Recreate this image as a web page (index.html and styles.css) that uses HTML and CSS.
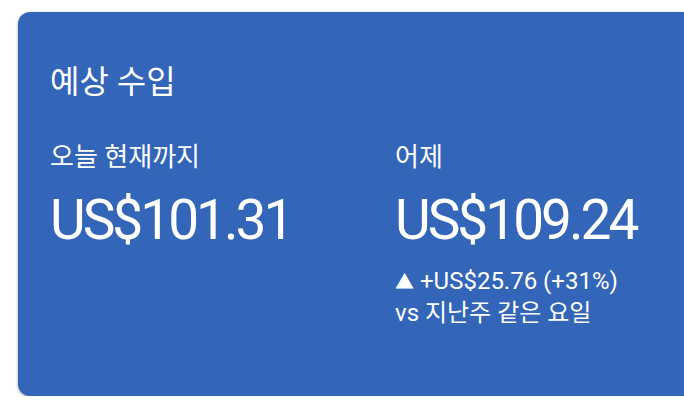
FILE: index.html
```html
<!doctype html>
<html>
  <head>
    <meta charset="utf-8">
    <title>예상 수입</title>
    <link rel="stylesheet" href="styles.css">
  </head>
  <body>
    <div class="card">
      <h2 class="title">예상 수입</h2>
      <div class="stats">
        <div class="stat">
          <div class="label">오늘 현재까지</div>
          <div class="amount">US$101.31</div>
        </div>
        <div class="stat">
          <div class="label">어제</div>
          <div class="amount">US$109.24</div>
          <div class="delta"><span class="arrow">▲</span> +US$25.76 (+31%)<br>vs 지난주 같은 요일</div>
        </div>
      </div>
    </div>
  </body>
</html>
```
FILE: styles.css
```css
body {
  margin: 0;
  padding: 12px 0 0 18px;
  background: white;
  font-family: Roboto, "Noto Sans CJK KR", sans-serif;
  overflow: hidden;
}

.card {
  height: 384px;
  box-sizing: border-box;
  padding: 50px 0 0 32px;
  background: #3365b9;
  color: white;
  border-radius: 12px 0 0 12px;
  box-shadow: 0 1px 3px rgba(0, 0, 0, 0.35);
}

.title {
  margin: 0;
  font-size: 32px;
  font-weight: 400;
  line-height: 40px;
}

.stats {
  display: flex;
  margin-top: 38px;
}

.stat {
  flex: none;
  width: 345px;
}

.stat:last-child {
  width: 280px;
}

.label {
  font-size: 26px;
  line-height: 34px;
}

.amount {
  margin-top: 14px;
  font-size: 55px;
  line-height: 64px;
  letter-spacing: -3px;
  white-space: nowrap;
}

.delta {
  margin-top: 14px;
  font-size: 24px;
  line-height: 30px;
  white-space: nowrap;
}

.arrow {
  font-size: 19px;
}
```
